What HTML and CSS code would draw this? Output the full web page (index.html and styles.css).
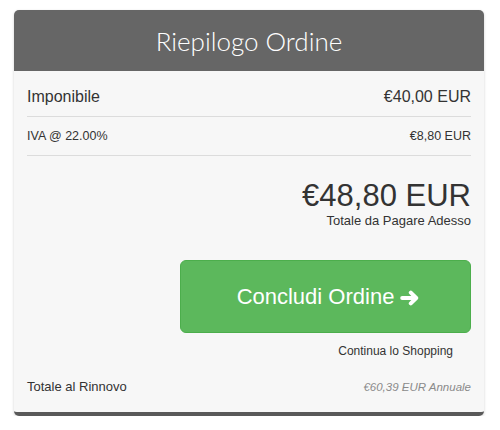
FILE: index.html
```html
<!DOCTYPE html>
<html lang="it">
<head>
<meta charset="utf-8">
<link rel="stylesheet" href="styles.css">
</head>
<body>
<div class="summary">
  <div class="summary-head">Riepilogo Ordine</div>
  <div class="summary-body">
    <div class="row row-main">
      <span>Imponibile</span>
      <span>€40,00 EUR</span>
    </div>
    <div class="row row-tax">
      <span>IVA @ 22.00%</span>
      <span>€8,80 EUR</span>
    </div>
    <div class="total">
      <div class="total-amount">€48,80 EUR</div>
      <div class="total-label">Totale da Pagare Adesso</div>
    </div>
    <div class="actions">
      <a class="btn-checkout" href="#">Concludi Ordine
        <svg class="arrow" viewBox="0 0 20 16" width="20" height="16" aria-hidden="true">
          <path d="M2.2 8H15.5" stroke="#fff" stroke-width="4" stroke-linecap="round" fill="none"/>
          <path d="M10.8 2.6L16.2 8l-5.4 5.4" stroke="#fff" stroke-width="4" stroke-linecap="round" stroke-linejoin="round" fill="none"/>
        </svg>
      </a>
      <a class="continue" href="#">Continua lo Shopping</a>
    </div>
    <div class="renew">
      <span>Totale al Rinnovo</span>
      <span class="renew-price">€60,39 EUR Annuale</span>
    </div>
  </div>
</div>
</body>
</html>
```

FILE: styles.css
```css
html, body {
  margin: 0;
  padding: 0;
  background: #ffffff;
}
body {
  padding: 10px 16px 0 14px;
  font-family: "Liberation Sans", Arial, sans-serif;
  color: #333333;
}
.summary {
  width: 470px;
  border-radius: 5px;
  background: #f7f7f7;
  border-bottom: 4px solid #595959;
  box-shadow: 0 1px 3px rgba(0,0,0,0.18);
  overflow: hidden;
}
.summary-head {
  height: 61px;
  background: #666666;
  color: #ffffff;
  font-family: "Lato", sans-serif;
  font-weight: 300;
  font-size: 26px;
  display: flex;
  align-items: center;
  justify-content: center;
}
.summary-body {
  padding: 0 13px 17px 13px;
}
.row {
  display: flex;
  justify-content: space-between;
  border-bottom: 1px solid #dcdcdc;
}
.row-main {
  padding: 17px 0 10px;
  font-size: 16px;
  line-height: 18px;
}
.row-tax {
  padding: 11px 0 11px;
  font-size: 12.5px;
  line-height: 16px;
}
.total {
  margin-top: 23px;
  text-align: right;
}
.total-amount {
  font-size: 31px;
  line-height: 34px;
  color: #333333;
}
.total-label {
  font-size: 13px;
  line-height: 16px;
}
.actions {
  margin-top: 31px;
  display: flex;
  flex-direction: column;
  align-items: flex-end;
}
.btn-checkout {
  width: 283px;
  height: 71px;
  padding-left: 6px;
  box-sizing: content-box;
  background: #5cb85c;
  border: 1px solid #4cae4c;
  border-radius: 6px;
  color: #ffffff;
  text-decoration: none;
  font-size: 22px;
  display: flex;
  align-items: center;
  justify-content: center;
  gap: 6px;
}
.arrow {
  display: block;
  margin-top: 2px;
}
.continue {
  margin-top: 10px;
  margin-right: 18px;
  font-size: 12px;
  line-height: 16px;
  color: #333333;
  text-decoration: none;
}
.renew {
  margin-top: 20px;
  display: flex;
  justify-content: space-between;
  font-size: 13px;
  line-height: 16px;
}
.renew-price {
  font-style: italic;
  font-size: 11.5px;
  color: #8a8a8a;
}
```
